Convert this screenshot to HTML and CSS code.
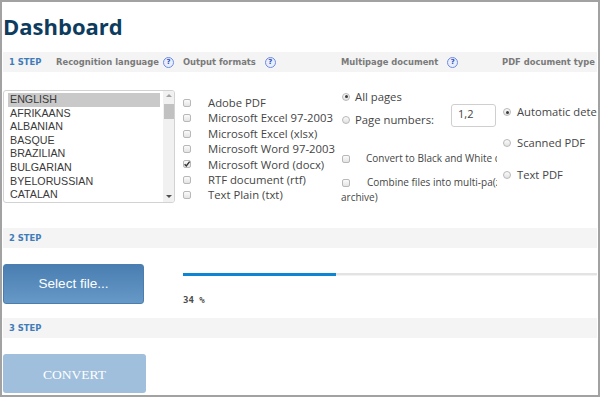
FILE: index.html
```html
<!DOCTYPE html>
<html>
<head>
<meta charset="utf-8">
<link rel="stylesheet" href="styles.css">
</head>
<body>
<div class="frame">
  <h1 class="title">Dashboard</h1>

  <div class="bar cols">
    <div class="hcell first"><span class="step step1">1 STEP</span><span class="hlabel">Recognition language</span><span class="help help-tight">?</span></div>
    <div class="hcell"><span class="hlabel">Output formats</span><span class="help">?</span></div>
    <div class="hcell"><span class="hlabel">Multipage document</span><span class="help">?</span></div>
    <div class="hcell"><span class="hlabel">PDF document type</span></div>
  </div>

  <div class="row1 cols">
    <div class="col-lang">
      <div class="listbox">
        <ul class="items">
          <li class="selected">ENGLISH</li>
          <li>AFRIKAANS</li>
          <li>ALBANIAN</li>
          <li>BASQUE</li>
          <li>BRAZILIAN</li>
          <li>BULGARIAN</li>
          <li>BYELORUSSIAN</li>
          <li>CATALAN</li>
        </ul>
        <div class="scrollbar">
          <span class="arrow up"></span>
          <span class="thumb"></span>
          <span class="arrow down"></span>
        </div>
      </div>
    </div>

    <div class="col-formats">
      <div class="opt"><span class="cb"></span><span>Adobe PDF</span></div>
      <div class="opt"><span class="cb"></span><span>Microsoft Excel 97-2003</span></div>
      <div class="opt"><span class="cb"></span><span>Microsoft Excel (xlsx)</span></div>
      <div class="opt"><span class="cb"></span><span>Microsoft Word 97-2003</span></div>
      <div class="opt"><span class="cb checked"><svg width="8" height="8" viewBox="0 0 8 8"><path d="M1.6 4.2 L3.3 6 L6.6 1.6" fill="none" stroke="#333" stroke-width="1.4"/></svg></span><span>Microsoft Word (docx)</span></div>
      <div class="opt"><span class="cb"></span><span>RTF document (rtf)</span></div>
      <div class="opt"><span class="cb"></span><span>Text Plain (txt)</span></div>
    </div>

    <div class="col-multi">
      <div class="mopt all"><span class="rb checked"></span><span>All pages</span></div>
      <div class="mopt pages">
        <span class="rb"></span><span class="pn-label">Page numbers:</span>
        <span class="pn-input">1,2</span>
      </div>
      <div class="small-wide">
        <div class="small-opt bw"><span class="cb"></span><span>Convert to Black and White colors</span></div>
        <div class="small-opt combine"><span class="cb"></span>Combine files into multi-pa(zip archive)</div>
      </div>
    </div>

    <div class="col-pdf">
      <div class="popt auto"><span class="rb checked"></span><span>Automatic detection</span></div>
      <div class="popt scanned"><span class="rb"></span><span>Scanned PDF</span></div>
      <div class="popt text"><span class="rb"></span><span>Text PDF</span></div>
    </div>
  </div>

  <div class="bar step-only"><span class="step">2 STEP</span></div>

  <div class="row2">
    <div class="select-btn">Select file...</div>
    <div class="progress-wrap">
      <div class="track"><div class="fill" style="width:153px"></div></div>
      <div class="pct">34 %</div>
    </div>
  </div>

  <div class="bar step-only"><span class="step">3 STEP</span></div>

  <div class="row3">
    <div class="convert-btn">CONVERT</div>
  </div>
</div>
</body>
</html>
```

FILE: styles.css
```css
html, body {
  margin: 0;
  padding: 0;
  background: #ffffff;
}

.frame {
  width: 600px;
  height: 397px;
  box-sizing: border-box;
  border: 2px solid #a2a2a2;
  padding: 0 1px;
  overflow: hidden;
  font-family: "Open Sans", sans-serif;
  color: #444;
}

.title {
  margin: 0;
  height: 50px;
  box-sizing: border-box;
  padding: 9px 0 0 0;
  font-family: "Open Sans", sans-serif;
  font-weight: 700;
  font-size: 22px;
  line-height: 30px;
  color: #0e3c5f;
}

/* step bars */
.bar {
  background: #f4f4f4;
  height: 20px;
  font-family: "DejaVu Sans", sans-serif;
  font-weight: 700;
  font-size: 8.4px;
  line-height: 20px;
}

.cols {
  display: grid;
  grid-template-columns: 180px 158px 161px 1fr;
}

.hcell {
  display: flex;
  align-items: center;
  white-space: nowrap;
  overflow: hidden;
}

.hcell.first {
  padding-left: 6px;
}

.step {
  color: #3f7bb9;
}

.step1 {
  display: inline-block;
  width: 47px;
}

.step-only {
  padding-left: 6px;
}

.hlabel {
  color: #7a7a7a;
}

.help {
  display: inline-block;
  width: 9px;
  height: 9px;
  margin-left: 9px;
  border: 1px solid #6f8ae0;
  border-radius: 50%;
  background: #e9eefc;
  color: #2f4fb5;
  font-size: 7px;
  line-height: 9px;
  text-align: center;
}

.help-tight {
  margin-left: 4px;
}

/* row 1 */
.row1 {
  height: 156px;
}

.col-lang {
  padding-top: 18px;
}

.listbox {
  width: 172px;
  height: 113px;
  box-sizing: border-box;
  border: 1px solid #d2d2d2;
  border-radius: 3px;
  display: flex;
  overflow: hidden;
}

.items {
  list-style: none;
  margin: 0;
  padding: 2px 0 0 4px;
  width: 157px;
  box-sizing: border-box;
  font-family: "Liberation Sans", Arial, sans-serif;
  font-size: 10.7px;
  line-height: 13.6px;
  color: #3a3a3a;
}

.items li {
  padding-left: 2px;
  width: 150px;
}

.items li.selected {
  background: #c9c9c9;
}

.scrollbar {
  width: 13px;
  background: #f1f1f1;
  display: flex;
  flex-direction: column;
  align-items: center;
  margin-left: 3px;
}

.arrow {
  width: 0;
  height: 0;
  border-left: 3px solid transparent;
  border-right: 3px solid transparent;
}

.arrow.up {
  margin-top: 3px;
  border-bottom: 3px solid #a3a3a3;
}

.arrow.down {
  margin-top: auto;
  margin-bottom: 4px;
  border-top: 3px solid #505050;
}

.thumb {
  width: 10px;
  height: 15px;
  margin-top: 7px;
  background: #c1c1c1;
}

/* checkbox & radio */
.cb {
  display: inline-block;
  flex: none;
  width: 8px;
  height: 8px;
  box-sizing: border-box;
  border: 1px solid #b8b8b8;
  border-radius: 2px;
  background: linear-gradient(#fbfbfb, #e4e4e4);
  position: relative;
}

.cb svg {
  position: absolute;
  left: -1px;
  top: -1px;
}

.rb {
  display: inline-block;
  flex: none;
  width: 8px;
  height: 8px;
  box-sizing: border-box;
  border: 1px solid #b8b8b8;
  border-radius: 50%;
  background: linear-gradient(#fbfbfb, #e2e2e2);
  position: relative;
}

.rb.checked::after {
  content: "";
  position: absolute;
  left: 1.5px;
  top: 1.5px;
  width: 3px;
  height: 3px;
  border-radius: 50%;
  background: #3c3c3c;
}

/* output formats */
.col-formats {
  padding-top: 23px;
  font-size: 11.3px;
  line-height: 15.4px;
  color: #454545;
}

.opt {
  display: flex;
  align-items: center;
  white-space: nowrap;
}

.opt .cb {
  margin-right: 17px;
}

/* multipage */
.col-multi {
  width: 156px;
  overflow: hidden;
  padding-top: 17px;
  font-size: 11.3px;
  color: #454545;
}

.mopt {
  display: flex;
  align-items: center;
  white-space: nowrap;
  line-height: 15px;
  padding-left: 1px;
}

.mopt .rb {
  margin-right: 5px;
}

.mopt.pages {
  height: 23px;
  align-items: flex-end;
}

.mopt.pages .rb {
  margin-bottom: 3px;
}

.pn-label {
  line-height: 14px;
}

.pn-input {
  margin-left: 17px;
  width: 45px;
  height: 23px;
  box-sizing: border-box;
  border: 1px solid #cfcfcf;
  border-radius: 3px;
  padding: 1px 0 0 6px;
  font-size: 11px;
  line-height: 15px;
  align-self: flex-start;
}

.small-wide {
  width: 185px;
}

.small-opt {
  font-size: 10px;
  line-height: 15px;
  color: #454545;
}

.small-opt .cb {
  margin-left: 1px;
  vertical-align: -1px;
}

.small-opt.bw {
  margin-top: 24px;
  display: flex;
  align-items: center;
  white-space: nowrap;
}

.small-opt.bw .cb {
  margin-right: 16px;
}

.small-opt.combine {
  margin-top: 9px;
}

.small-opt.combine .cb {
  margin-right: 17px;
}

/* pdf type */
.col-pdf {
  padding-top: 32px;
  font-size: 11.2px;
  color: #454545;
  white-space: nowrap;
  overflow: hidden;
  position: relative;
  background: #ffffff;
}

.popt {
  display: flex;
  align-items: center;
  line-height: 16px;
  padding-left: 1px;
}

.popt .rb {
  margin-right: 6px;
}

.popt.scanned {
  margin-top: 15px;
}

.popt.text {
  margin-top: 16px;
}

/* row 2 */
.row2 {
  height: 70px;
  box-sizing: border-box;
  padding-top: 16px;
  display: flex;
}

.select-btn {
  width: 141px;
  height: 40px;
  box-sizing: border-box;
  border: 1px solid #4b7eae;
  border-radius: 3px;
  background: linear-gradient(#4a7eb2, #6699c6);
  color: #ffffff;
  font-family: "Liberation Sans", Arial, sans-serif;
  font-size: 13.5px;
  line-height: 37px;
  text-align: center;
}

.progress-wrap {
  flex: 1;
  margin-left: 39px;
  padding-top: 9px;
}

.track {
  height: 3px;
  background: linear-gradient(#e3e3e3 0, #e3e3e3 2px, #f2f2f2 2px, #f2f2f2 3px);
}

.fill {
  height: 3px;
  background: #0c86d2;
}

.pct {
  margin-top: 19px;
  font-family: "DejaVu Sans Mono", monospace;
  font-weight: 700;
  font-size: 9px;
  line-height: 10px;
  color: #4a4a4a;
}

/* row 3 */
.row3 {
  padding-top: 16px;
}

.convert-btn {
  width: 143px;
  height: 39px;
  border-radius: 3px;
  background: #a0bfdc;
  color: #ffffff;
  font-family: "Liberation Serif", "Times New Roman", serif;
  font-size: 13.5px;
  line-height: 42px;
  text-align: center;
}
```
